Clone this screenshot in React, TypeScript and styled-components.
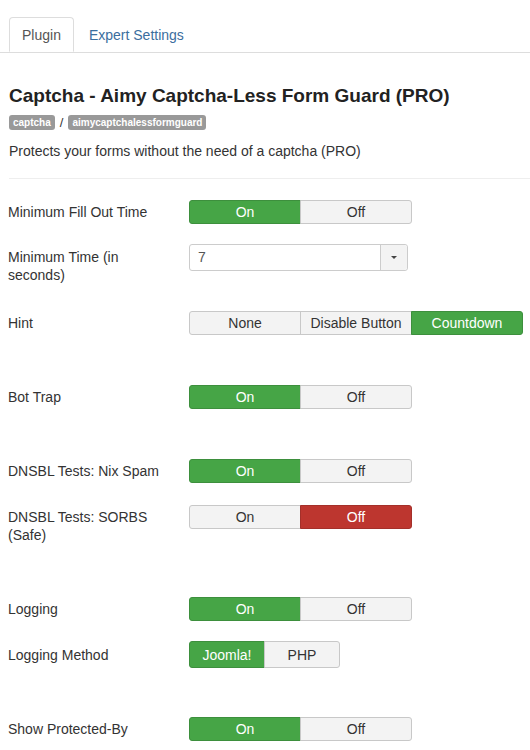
import React from "react";
import styled, { createGlobalStyle } from "styled-components";

const GlobalStyle = createGlobalStyle`
  html, body {
    margin: 0;
    padding: 0;
    background: #fff;
  }
  body {
    font-family: "Liberation Sans", Arial, sans-serif;
    color: #333;
  }
`;

const Page = styled.div`
  width: 530px;
  height: 750px;
  overflow: hidden;
  padding-top: 17px;
  box-sizing: border-box;
`;

const Tabs = styled.div`
  display: flex;
  padding-left: 9px;
  border-bottom: 1px solid #ddd;
  height: 35px;
`;

const Tab = styled.div<{ $active?: boolean }>`
  height: 35px;
  box-sizing: border-box;
  padding: 0 ${(p) => (p.$active ? "12px" : "14px")};
  line-height: 34px;
  font-size: 14px;
  color: ${(p) => (p.$active ? "#555" : "#3b6e9e")};
  background: #fff;
  border: 1px solid ${(p) => (p.$active ? "#ddd" : "transparent")};
  border-bottom-color: ${(p) => (p.$active ? "#fff" : "transparent")};
  border-radius: 4px 4px 0 0;
`;

const Header = styled.div`
  padding: 0 0 0 9px;
`;

const Title = styled.h1`
  margin: 32px 0 0;
  font-size: 19px;
  line-height: 22px;
  font-weight: bold;
  color: #222;
`;

const Crumbs = styled.div`
  display: flex;
  align-items: center;
  gap: 5px;
  margin-top: 8px;
  height: 15px;
`;

const Badge = styled.span`
  display: inline-block;
  background: #999;
  color: #fff;
  font-size: 10px;
  font-weight: bold;
  line-height: 15px;
  padding: 0 4px;
  border-radius: 3px;
`;

const Slash = styled.span`
  font-size: 13px;
  color: #333;
`;

const Description = styled.p`
  margin: 12px 0 0;
  font-size: 14px;
  line-height: 18px;
  color: #333;
`;

const Divider = styled.hr`
  margin: 18px 0 0 9px;
  border: 0;
  border-top: 1px solid #eee;
`;

const Form = styled.div`
  padding: 0 0 0 8px;
`;

const Row = styled.div<{ $space: number }>`
  display: flex;
  align-items: flex-start;
  margin-top: ${(p) => p.$space}px;
`;

const Label = styled.div<{ $pad?: number }>`
  width: 152px;
  margin-right: 29px;
  padding-top: ${(p) => p.$pad ?? 3}px;
  font-size: 14px;
  line-height: 18px;
  color: #333;
`;

const Group = styled.div`
  display: flex;
`;

const Btn = styled.div<{ $w: number; $tone?: "success" | "danger"; $h?: number }>`
  width: ${(p) => p.$w}px;
  height: ${(p) => p.$h ?? 24}px;
  box-sizing: border-box;
  display: flex;
  align-items: center;
  justify-content: center;
  font-size: 14px;
  color: ${(p) => (p.$tone ? "#fff" : "#333")};
  background: ${(p) =>
    p.$tone === "success" ? "#46a546" : p.$tone === "danger" ? "#bd362f" : "#f3f3f3"};
  border: 1px solid
    ${(p) =>
      p.$tone === "success" ? "#3d8f3d" : p.$tone === "danger" ? "#a4302a" : "#c8c8c8"};
  margin-left: -1px;
  &:first-child {
    margin-left: 0;
    border-radius: 3px 0 0 3px;
  }
  &:last-child {
    border-radius: 0 3px 3px 0;
  }
`;

const Select = styled.div`
  width: 219px;
  height: 27px;
  box-sizing: border-box;
  display: flex;
  border: 1px solid #ccc;
  border-radius: 3px;
  background: #fff;
`;

const SelectValue = styled.div`
  flex: 1;
  padding-left: 8px;
  line-height: 25px;
  font-size: 14px;
  color: #555;
`;

const SelectArrow = styled.div`
  width: 26px;
  border-left: 1px solid #ccc;
  background: #f3f3f3;
  border-radius: 0 3px 3px 0;
  display: flex;
  align-items: center;
  justify-content: center;
`;

const Caret = styled.span`
  width: 0;
  height: 0;
  border-left: 3px solid transparent;
  border-right: 3px solid transparent;
  border-top: 3px solid #444;
`;

type Opt = { text: string; tone?: "success" | "danger" };

const Toggle: React.FC<{ options: Opt[]; w: number; h?: number }> = ({ options, w, h }) => (
  <Group>
    {options.map((o) => (
      <Btn key={o.text} $w={w} $h={h} $tone={o.tone}>
        {o.text}
      </Btn>
    ))}
  </Group>
);

const onOff: Opt[] = [{ text: "On", tone: "success" }, { text: "Off" }];

const App: React.FC = () => {
  return (
    <Page>
      <GlobalStyle />
      <Tabs>
        <Tab $active>Plugin</Tab>
        <Tab>Expert Settings</Tab>
      </Tabs>
      <Header>
        <Title>Captcha - Aimy Captcha-Less Form Guard (PRO)</Title>
        <Crumbs>
          <Badge>captcha</Badge>
          <Slash>/</Slash>
          <Badge>aimycaptchalessformguard</Badge>
        </Crumbs>
        <Description>Protects your forms without the need of a captcha (PRO)</Description>
      </Header>
      <Divider />
      <Form>
        <Row $space={21}>
          <Label>Minimum Fill Out Time</Label>
          <Toggle options={onOff} w={112} />
        </Row>
        <Row $space={20}>
          <Label $pad={4}>Minimum Time (in seconds)</Label>
          <Select>
            <SelectValue>7</SelectValue>
            <SelectArrow>
              <Caret />
            </SelectArrow>
          </Select>
        </Row>
        <Row $space={27}>
          <Label>Hint</Label>
          <Toggle
            options={[
              { text: "None" },
              { text: "Disable Button" },
              { text: "Countdown", tone: "success" },
            ]}
            w={112}
          />
        </Row>
        <Row $space={50}>
          <Label>Bot Trap</Label>
          <Toggle options={onOff} w={112} />
        </Row>
        <Row $space={50}>
          <Label>DNSBL Tests: Nix Spam</Label>
          <Toggle options={onOff} w={112} />
        </Row>
        <Row $space={22}>
          <Label>DNSBL Tests: SORBS (Safe)</Label>
          <Toggle options={[{ text: "On" }, { text: "Off", tone: "danger" }]} w={112} />
        </Row>
        <Row $space={53}>
          <Label>Logging</Label>
          <Toggle options={onOff} w={112} />
        </Row>
        <Row $space={20}>
          <Label $pad={5}>Logging Method</Label>
          <Toggle options={[{ text: "Joomla!", tone: "success" }, { text: "PHP" }]} w={76} h={27} />
        </Row>
        <Row $space={49}>
          <Label>Show Protected-By</Label>
          <Toggle options={onOff} w={112} />
        </Row>
      </Form>
    </Page>
  );
};

export default App;
